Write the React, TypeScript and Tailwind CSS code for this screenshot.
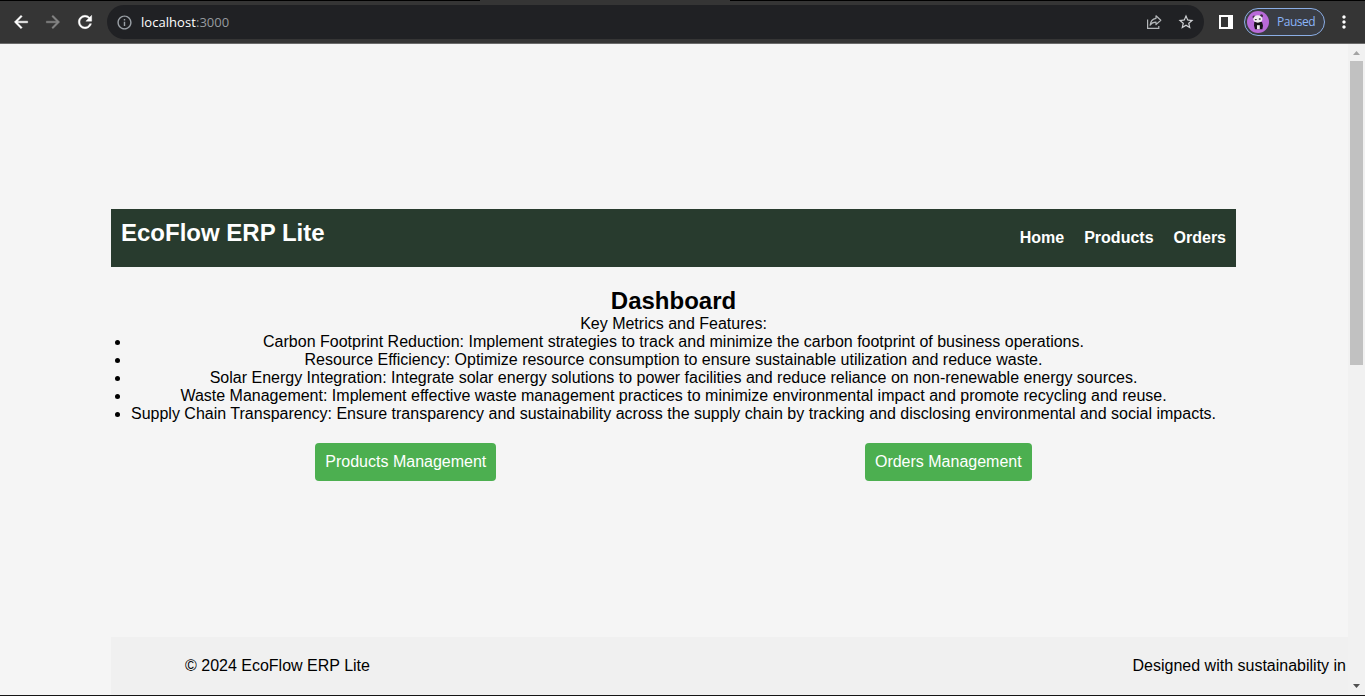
import { MdInfoOutline, MdStarBorder, MdMoreVert } from "react-icons/md";

const features = [
  "Carbon Footprint Reduction: Implement strategies to track and minimize the carbon footprint of business operations.",
  "Resource Efficiency: Optimize resource consumption to ensure sustainable utilization and reduce waste.",
  "Solar Energy Integration: Integrate solar energy solutions to power facilities and reduce reliance on non-renewable energy sources.",
  "Waste Management: Implement effective waste management practices to minimize environmental impact and promote recycling and reuse.",
  "Supply Chain Transparency: Ensure transparency and sustainability across the supply chain by tracking and disclosing environmental and social impacts.",
];

function NavIcon({ path, color }: { path: string; color: string }) {
  return (
    <svg width="20" height="20" viewBox="0 0 24 24" fill={color} stroke={color} strokeWidth="0.5">
      <path d={path} />
    </svg>
  );
}

const backPath = "M20 11H7.830l5.590-5.590L12 4l-8 8 8 8 1.410-1.410L7.830 13H20v-2z";
const forwardPath = "M12 4l-1.410 1.410L16.170 11H4v2h12.170l-5.580 5.590L12 20l8-8z";
const reloadPath =
  "M17.650 6.350C16.200 4.900 14.210 4 12 4c-4.420 0-7.990 3.580-7.990 8s3.570 8 7.990 8c3.730 0 6.840-2.550 7.730-6h-2.080c-.82 2.330-3.040 4-5.650 4-3.310 0-6-2.690-6-6s2.690-6 6-6c1.660 0 3.140.69 4.220 1.780L13 11h7V4l-2.350 2.350z";

function ShareIcon() {
  return (
    <svg width="16" height="16" viewBox="0 0 16 16" fill="none" stroke="#b4b7ba" strokeWidth="1.2">
      <path d="M1.600 5.500v8.900h11.200v-2.500" />
      <path d="M10 1.800 14.800 6.300 10 10.600V8.200C7.300 8.200 5.400 9.100 4.100 11.200 4.500 7.400 6.600 4.900 10 4.300z" strokeLinejoin="round" />
    </svg>
  );
}

function PandaAvatar() {
  return (
    <svg width="22" height="22" viewBox="0 0 22 22">
      <circle cx="11" cy="11" r="11" fill="#b96ad9" />
      <circle cx="7" cy="6" r="1.500" fill="#3b2b42" />
      <circle cx="14.500" cy="4.800" r="1.500" fill="#3b2b42" />
      <path d="M7.300 11h7.700l1 3.500-.6 3.700H8l-1-3.700z" fill="#18151b" />
      <ellipse cx="10.800" cy="8" rx="4.600" ry="3.700" fill="#f2eff2" />
      <ellipse cx="8.800" cy="8.600" rx="1.100" ry=".7" fill="#28222b" />
      <ellipse cx="12.800" cy="8" rx="1.100" ry=".7" fill="#28222b" />
      <path d="M10 14.200h2.800v4H10z" fill="#eee9ef" />
    </svg>
  );
}

function Toolbar() {
  return (
    <div className="flex h-11 shrink-0 flex-col bg-[#353535]">
      <div className="flex h-px shrink-0 bg-black pl-[480px]">
        <div className="w-[250px] bg-[#353535]" />
      </div>
      <div className="flex h-[42px] shrink-0 items-center pl-[11px]">
        <div className="flex gap-3">
          <NavIcon path={backPath} color="#fff" />
          <NavIcon path={forwardPath} color="#858585" />
          <NavIcon path={reloadPath} color="#fff" />
        </div>
        <div className="ml-3 flex h-[34px] w-[1097px] items-center rounded-full bg-[#202124] pl-[9px] pr-[9px]">
          <MdInfoOutline size={17} color="#9aa0a6" />
          <p className="ml-[8px] font-['Open_Sans',sans-serif] text-[13px] leading-4 tracking-[0.05px] text-white">
            localhost<span className="text-[#969a9f]">:3000</span>
          </p>
          <div className="ml-auto flex items-center gap-[15px]">
            <ShareIcon />
            <MdStarBorder size={18} color="#d0d2d5" />
          </div>
        </div>
        <svg width="14" height="14" className="ml-[15px]">
          <path fill="#fff" fillRule="evenodd" d="M0 0h14v14H0zM2 2v10h7V2z" />
        </svg>
        <div className="ml-[11px] flex h-7 w-[81px] items-center rounded-full border border-[#8baee5] bg-[#3a3d44] pl-[2px]">
          <PandaAvatar />
          <span className="ml-[8px] font-['Open_Sans',sans-serif] text-[12px] leading-4 tracking-[-0.5px] text-[#8ab4f8]">Paused</span>
        </div>
        <MdMoreVert size={20} color="#fff" className="ml-[9px]" />
      </div>
      <div className="h-px bg-[#6a6a6a]" />
    </div>
  );
}

function Scrollbar() {
  return (
    <div className="flex w-[17px] shrink-0 flex-col items-center bg-[#f1f1f1]">
      <svg width="17" height="17" viewBox="0 0 17 17" className="shrink-0">
        <path d="M5 11 8.500 7 12 11z" fill="#a3a3a3" />
      </svg>
      <div className="h-[304px] w-[13px] bg-[#c1c1c1]" />
      <svg width="17" height="17" viewBox="0 0 17 17" className="mt-auto shrink-0">
        <path d="M5 6 8.500 10 12 6z" fill="#505050" />
      </svg>
    </div>
  );
}

export default function App() {
  return (
    <div className="flex h-[696px] w-[1365px] flex-col overflow-hidden bg-[#f5f5f5] font-['Liberation_Sans',Arial,sans-serif] text-base leading-[18px] text-black">
      <Toolbar />
      <div className="flex min-h-0 flex-1">
        <div className="flex min-w-0 flex-1 flex-col overflow-hidden pl-[111px] pt-[165px]">
          <header className="flex h-[58px] w-[1125px] shrink-0 items-start justify-between bg-[#283b2e] p-[10px] text-white">
            <h1 className="text-2xl font-bold leading-[28px]">EcoFlow ERP Lite</h1>
            <nav className="mt-[10px] flex gap-5 font-bold">
              <a href="#home">Home</a>
              <a href="#products">Products</a>
              <a href="#orders">Orders</a>
            </nav>
          </header>
          <main className="flex w-[1125px] flex-col pt-5 text-center">
            <h2 className="mb-px text-2xl font-bold leading-[27px]">Dashboard</h2>
            <p>Key Metrics and Features:</p>
            <ul className="list-disc px-5">
              {features.map((feature) => (
                <li key={feature} className="whitespace-nowrap">{feature}</li>
              ))}
            </ul>
            <div className="mt-5 flex justify-around px-5">
              <a href="#products" className="rounded bg-[#4caf50] p-[10px] text-white">Products Management</a>
              <a href="#orders" className="rounded bg-[#4caf50] p-[10px] text-white">Orders Management</a>
            </div>
          </main>
          <footer className="mt-auto flex h-[58px] shrink-0 justify-between whitespace-nowrap bg-[#f0f0f0] pl-[74px] pr-[2px] pt-5">
            <p>© 2024 EcoFlow ERP Lite</p>
            <p>Designed with sustainability in</p>
          </footer>
        </div>
        <Scrollbar />
      </div>
      <div className="h-px shrink-0 bg-[#151515]" />
    </div>
  );
}
